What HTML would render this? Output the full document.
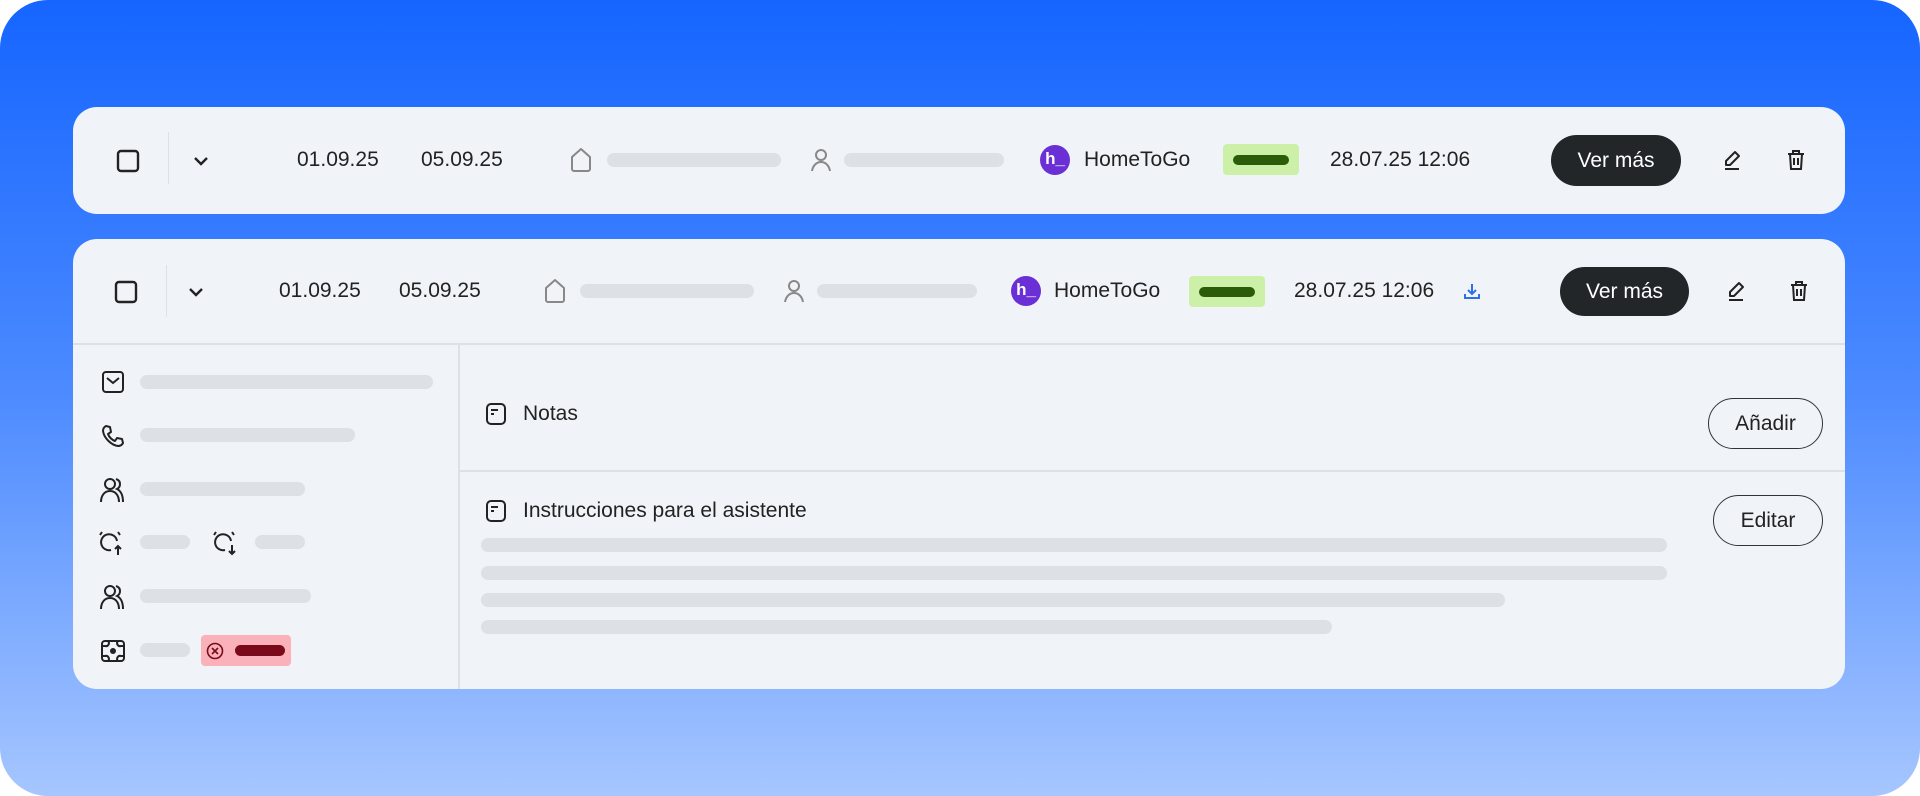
<!DOCTYPE html>
<html><head><meta charset="utf-8"><style>
*{margin:0;padding:0;box-sizing:border-box}
body{width:1920px;height:796px;background:#fff;position:relative;overflow:hidden;font-family:"Liberation Sans",sans-serif;color:#222}
.bg{position:absolute;left:0;top:0;width:1920px;height:796px;border-radius:48px;background:linear-gradient(180deg,#1565ff 0%,#4d8bff 50%,#a6c6ff 100%)}
.card{position:absolute;left:73px;width:1772px;background:#f0f4f9;border-radius:24px}
.a{position:absolute}
.t{position:absolute;font-size:21px;color:#222;line-height:24px;white-space:nowrap}
.bar{position:absolute;height:14px;border-radius:7px;background:#dde0e5}
.btn{position:absolute;background:#222629;color:#fff;border-radius:26px;font-size:21px;display:flex;align-items:center;justify-content:center}
.obtn{position:absolute;border:1.5px solid #333;border-radius:26px;font-size:21px;display:flex;align-items:center;justify-content:center;color:#222}
.badge{position:absolute;background:#ccf0a8;border-radius:4px}
.badge i{position:absolute;left:10px;right:10px;top:50%;height:10px;margin-top:-5px;background:#2a5c0a;border-radius:5px}
.logo{position:absolute;width:30px;height:30px;border-radius:50%;background:#6b2fd6;color:#fff;font-weight:bold;font-size:17px;line-height:28px;text-align:center}
.line{position:absolute;background:#dde1e7}
svg{position:absolute}
</style></head><body>
<div class="bg"></div>

<!-- Card 1 -->
<div class="card" style="top:107px;height:107px"></div>
<svg style="left:116px;top:149px" width="24" height="24" viewBox="0 0 24 24"><rect x="2" y="2" width="20" height="20" rx="3" fill="none" stroke="#222" stroke-width="2.4"/></svg>
<div class="line" style="left:168px;top:132px;width:1px;height:52px"></div>
<svg style="left:191px;top:151px" width="20" height="20" viewBox="0 0 20 20"><path d="M4 7l6 6 6-6" fill="none" stroke="#222" stroke-width="2.4"/></svg>
<div class="t" style="left:297px;top:148px">01.09.25</div>
<div class="t" style="left:421px;top:148px">05.09.25</div>
<svg style="left:568px;top:146px" width="26" height="28" viewBox="0 0 26 28"><path d="M4 11L13 3l9 8v12a2 2 0 0 1-2 2H6a2 2 0 0 1-2-2z" fill="none" stroke="#888" stroke-width="2" stroke-linejoin="round"/></svg>
<div class="bar" style="left:607px;top:153px;width:174px"></div>
<svg style="left:808px;top:147px" width="26" height="26" viewBox="0 0 26 26"><circle cx="13" cy="8" r="5" fill="none" stroke="#888" stroke-width="2"/><path d="M4 24c1-6 5-9 9-9s8 3 9 9" fill="none" stroke="#888" stroke-width="2"/></svg>
<div class="bar" style="left:844px;top:153px;width:160px"></div>
<div class="logo" style="left:1040px;top:145px">h_</div>
<div class="t" style="left:1084px;top:148px">HomeToGo</div>
<div class="badge" style="left:1223px;top:144px;width:76px;height:31px"><i></i></div>
<div class="t" style="left:1330px;top:148px">28.07.25 12:06</div>
<div class="btn" style="left:1551px;top:135px;width:130px;height:51px">Ver más</div>
<svg style="left:1720px;top:148px" width="24" height="24" viewBox="0 0 24 24"><path d="M15 4l4 4-9 9H6v-4z" fill="none" stroke="#222" stroke-width="2" stroke-linejoin="round"/><path d="M5 21h14" stroke="#222" stroke-width="2"/></svg>
<svg style="left:1784px;top:148px" width="24" height="24" viewBox="0 0 24 24"><path d="M4 6h16M9 6V3h6v3M6 6l1 15h10l1-15M10 10v7M14 10v7" fill="none" stroke="#222" stroke-width="2"/></svg>

<!-- Card 2 -->
<div class="card" style="top:239px;height:450px"></div>
<svg style="left:114px;top:280px" width="24" height="24" viewBox="0 0 24 24"><rect x="2" y="2" width="20" height="20" rx="3" fill="none" stroke="#222" stroke-width="2.4"/></svg>
<div class="line" style="left:166px;top:265px;width:1px;height:52px"></div>
<svg style="left:186px;top:282px" width="20" height="20" viewBox="0 0 20 20"><path d="M4 7l6 6 6-6" fill="none" stroke="#222" stroke-width="2.4"/></svg>
<div class="t" style="left:279px;top:279px">01.09.25</div>
<div class="t" style="left:399px;top:279px">05.09.25</div>
<svg style="left:542px;top:277px" width="26" height="28" viewBox="0 0 26 28"><path d="M4 11L13 3l9 8v12a2 2 0 0 1-2 2H6a2 2 0 0 1-2-2z" fill="none" stroke="#888" stroke-width="2" stroke-linejoin="round"/></svg>
<div class="bar" style="left:580px;top:284px;width:174px"></div>
<svg style="left:781px;top:278px" width="26" height="26" viewBox="0 0 26 26"><circle cx="13" cy="8" r="5" fill="none" stroke="#888" stroke-width="2"/><path d="M4 24c1-6 5-9 9-9s8 3 9 9" fill="none" stroke="#888" stroke-width="2"/></svg>
<div class="bar" style="left:817px;top:284px;width:160px"></div>
<div class="logo" style="left:1011px;top:276px">h_</div>
<div class="t" style="left:1054px;top:279px">HomeToGo</div>
<div class="badge" style="left:1189px;top:276px;width:76px;height:31px"><i></i></div>
<div class="t" style="left:1294px;top:279px">28.07.25 12:06</div>
<svg style="left:1462px;top:281px" width="20" height="20" viewBox="0 0 20 20"><path d="M10 3v10M6 9l4 4 4-4M3 13v4h14v-4" fill="none" stroke="#2f6fe8" stroke-width="2"/></svg>
<div class="btn" style="left:1560px;top:267px;width:129px;height:49px">Ver más</div>
<svg style="left:1724px;top:279px" width="24" height="24" viewBox="0 0 24 24"><path d="M15 4l4 4-9 9H6v-4z" fill="none" stroke="#222" stroke-width="2" stroke-linejoin="round"/><path d="M5 21h14" stroke="#222" stroke-width="2"/></svg>
<svg style="left:1787px;top:279px" width="24" height="24" viewBox="0 0 24 24"><path d="M4 6h16M9 6V3h6v3M6 6l1 15h10l1-15M10 10v7M14 10v7" fill="none" stroke="#222" stroke-width="2"/></svg>

<div class="line" style="left:73px;top:343px;width:1772px;height:1.5px"></div>
<div class="line" style="left:458px;top:343px;width:1.5px;height:346px"></div>
<div class="line" style="left:459px;top:470px;width:1386px;height:1.5px"></div>

<!-- left column -->
<svg style="left:100px;top:370px" width="26" height="24" viewBox="0 0 26 24"><rect x="3" y="2" width="20" height="20" rx="3" fill="none" stroke="#222" stroke-width="2"/><path d="M7 8l6 5 6-5" fill="none" stroke="#222" stroke-width="2"/></svg>
<div class="bar" style="left:140px;top:375px;width:293px"></div>
<svg style="left:100px;top:423px" width="26" height="26" viewBox="0 0 26 26"><path d="M6 3l4 1 1 5-3 2c1 3 4 6 7 7l2-3 5 1 1 4c-1 2-3 3-5 3C11 22 4 15 3 8c0-2 1-4 3-5z" fill="none" stroke="#222" stroke-width="2" stroke-linejoin="round"/></svg>
<div class="bar" style="left:140px;top:428px;width:215px"></div>
<svg style="left:99px;top:476px" width="28" height="28" viewBox="0 0 28 28"><circle cx="11" cy="8" r="5" fill="none" stroke="#222" stroke-width="2"/><path d="M2 26c0-7 4-11 9-11s9 4 9 11" fill="none" stroke="#222" stroke-width="2"/><path d="M17 3c3 1 4 3 4 5s-1 4-3 5c4 2 6 6 6 13" fill="none" stroke="#222" stroke-width="2"/></svg>
<div class="bar" style="left:140px;top:482px;width:165px"></div>
<svg style="left:98px;top:529px" width="28" height="28" viewBox="0 0 28 28"><path d="M19 12a8 8 0 1 0-6 9" fill="none" stroke="#222" stroke-width="2"/><path d="M4 3l-2 3M20 3l2 3M20 26v-9M17 20l3-3 3 3" fill="none" stroke="#222" stroke-width="2"/></svg>
<div class="bar" style="left:140px;top:535px;width:50px"></div>
<svg style="left:212px;top:529px" width="28" height="28" viewBox="0 0 28 28"><path d="M19 12a8 8 0 1 0-6 9" fill="none" stroke="#222" stroke-width="2"/><path d="M4 3l-2 3M20 3l2 3M20 16v9M17 22l3 3 3-3" fill="none" stroke="#222" stroke-width="2"/></svg>
<div class="bar" style="left:255px;top:535px;width:50px"></div>
<svg style="left:99px;top:583px" width="28" height="28" viewBox="0 0 28 28"><circle cx="11" cy="8" r="5" fill="none" stroke="#222" stroke-width="2"/><path d="M2 26c0-7 4-11 9-11s9 4 9 11" fill="none" stroke="#222" stroke-width="2"/><path d="M17 3c3 1 4 3 4 5s-1 4-3 5c4 2 6 6 6 13" fill="none" stroke="#222" stroke-width="2"/></svg>
<div class="bar" style="left:140px;top:589px;width:171px"></div>
<svg style="left:100px;top:638px" width="26" height="26" viewBox="0 0 26 26"><rect x="2" y="3" width="22" height="20" rx="3" fill="none" stroke="#222" stroke-width="2"/><circle cx="13" cy="13" r="3" fill="#222"/><path d="M2 8h3a3 3 0 0 0 3-5M24 8h-3a3 3 0 0 1-3-5M2 18h3a3 3 0 0 1 3 5M24 18h-3a3 3 0 0 0-3 5" fill="none" stroke="#222" stroke-width="2"/></svg>
<div class="bar" style="left:140px;top:643px;width:50px"></div>
<div class="a" style="left:201px;top:635px;width:90px;height:31px;background:#fbb1b9;border-radius:4px">
<svg style="left:5px;top:7px" width="18" height="18" viewBox="0 0 18 18"><circle cx="9" cy="9" r="7.5" fill="none" stroke="#7a0a1a" stroke-width="1.6"/><path d="M6 6l6 6M12 6l-6 6" stroke="#7a0a1a" stroke-width="1.6"/></svg>
<div class="a" style="left:34px;top:10px;width:50px;height:11px;border-radius:6px;background:#7a0a1a"></div>
</div>

<!-- right -->
<svg style="left:484px;top:402px" width="24" height="24" viewBox="0 0 24 24"><rect x="3" y="2" width="18" height="20" rx="4" fill="none" stroke="#222" stroke-width="2"/><path d="M7 8h7M7 12h3" stroke="#222" stroke-width="2"/></svg>
<div class="t" style="left:523px;top:402px">Notas</div>
<div class="obtn" style="left:1708px;top:398px;width:115px;height:51px">Añadir</div>
<svg style="left:484px;top:499px" width="24" height="24" viewBox="0 0 24 24"><rect x="3" y="2" width="18" height="20" rx="4" fill="none" stroke="#222" stroke-width="2"/><path d="M7 8h7M7 12h3" stroke="#222" stroke-width="2"/></svg>
<div class="t" style="left:523px;top:499px">Instrucciones para el asistente</div>
<div class="obtn" style="left:1713px;top:495px;width:110px;height:51px">Editar</div>
<div class="bar" style="left:481px;top:538px;width:1186px"></div>
<div class="bar" style="left:481px;top:566px;width:1186px"></div>
<div class="bar" style="left:481px;top:593px;width:1024px"></div>
<div class="bar" style="left:481px;top:620px;width:851px"></div>
</body></html>
